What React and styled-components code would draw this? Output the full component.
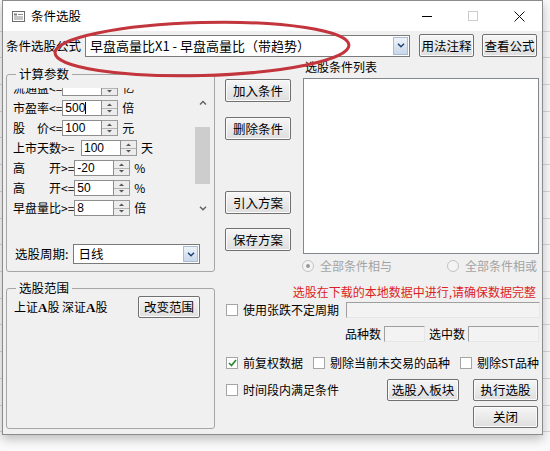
import React from "react";
import styled, { createGlobalStyle } from "styled-components";

const GlobalStyle = createGlobalStyle`
  html, body {
    margin: 0;
    padding: 0;
  }
  body {
    width: 550px;
    height: 451px;
    overflow: hidden;
    background-color: #fafafa;
    background-image: repeating-linear-gradient(
      to bottom,
      transparent 0,
      transparent 25.7px,
      #d6d6d6 25.7px,
      #d6d6d6 26.7px
    );
    background-position: 0 5px;
    font-family: "Noto Sans CJK SC", "Liberation Sans", sans-serif;
    font-size: 12px;
    line-height: 16px;
    color: #000;
  }
`;

const Dialog = styled.div`
  position: relative;
  margin-left: 2px;
  width: 541px;
  height: 435px;
  box-sizing: border-box;
  border: 1px solid #8c8c8c;
  background: #f0f0f0;
  display: flex;
  flex-direction: column;
  box-shadow: 0 4px 10px rgba(0, 0, 0, 0.25);
`;

const TitleBar = styled.div`
  height: 30px;
  background: #fff;
  display: flex;
  align-items: center;
  padding-left: 9px;
`;

const TitleText = styled.span`
  margin-left: 6px;
  font-size: 12.5px;
  flex: 1;
`;

const WinBtn = styled.div`
  width: 46px;
  height: 30px;
  display: flex;
  align-items: center;
  justify-content: center;
`;

const FormulaRow = styled.div`
  margin-top: 3px;
  height: 23px;
  padding: 0 3px;
  display: flex;
  align-items: center;
`;

const Label = styled.span`
  white-space: nowrap;
  margin-left: ${(p) => p.$ml || 0}px;
  font-size: ${(p) => p.$fs || 12}px;
`;

const Combo = styled.div`
  margin-left: ${(p) => p.$ml || 0}px;
  width: ${(p) => p.$w}px;
  height: ${(p) => p.$h}px;
  box-sizing: border-box;
  border: 1px solid #7a7a7a;
  background: #fff;
  display: flex;
  font-size: ${(p) => p.$fs || 12}px;
`;

const ComboText = styled.div`
  flex: 1;
  padding-left: 4px;
  display: flex;
  align-items: center;
  white-space: pre;
  overflow: hidden;
`;

const ComboArrow = styled.div`
  width: 15px;
  margin: 1px;
  box-sizing: border-box;
  border: 1px solid #a9bdd6;
  background: linear-gradient(#eef3f9, #c8d7ea);
  display: flex;
  align-items: center;
  justify-content: center;
`;

const Btn = styled.button`
  margin-top: ${(p) => p.$mt || 0}px;
  margin-left: ${(p) => p.$ml || 0}px;
  width: ${(p) => p.$w}px;
  height: ${(p) => p.$h || 22}px;
  padding: 0;
  font: inherit;
  font-size: 12.5px;
  color: #000;
  border: 1px solid #707070;
  border-radius: 2px;
  background: linear-gradient(#f6f6f6, #dedede);
  box-shadow: inset 0 0 0 1px #fbfbfb;
  flex-shrink: 0;
`;

const Main = styled.div`
  margin-top: 2px;
  flex: 1;
  display: flex;
  padding: 0 0 5px 3px;
`;

const LeftCol = styled.div`
  width: 210px;
  padding-top: 7px;
  display: flex;
  flex-direction: column;
  gap: 8px;
`;

const Group = styled.fieldset`
  margin: 0;
  min-width: 0;
  padding: ${(p) => p.$pad};
  border: 1px solid #a6a6a6;
  border-radius: 3px;
  flex: ${(p) => (p.$grow ? 1 : "none")};
  width: 209px;
  box-sizing: border-box;
`;

const Legend = styled.legend`
  margin-left: 6px;
  padding: 0 3px;
  line-height: 16px;
  font-size: 12.5px;
`;

const ScrollArea = styled.div`
  height: 134px;
  display: flex;
`;

const Viewport = styled.div`
  flex: 1;
  overflow: hidden;
  padding-left: 3px;
`;

const RowList = styled.div`
  margin-top: -10px;
`;

const ParamRow = styled.div`
  height: 20px;
  display: flex;
  align-items: center;
`;

const ParamLabel = styled.span`
  min-width: ${(p) => p.$w}px;
  flex-shrink: 0;
  white-space: nowrap;
  font-size: 12px;
`;

const NumInput = styled.div`
  width: 40px;
  height: 16px;
  box-sizing: border-box;
  border: 1px solid #8e8e8e;
  background: #fff;
  padding-left: 2px;
  display: flex;
  align-items: center;
  font-family: "Liberation Sans", sans-serif;
  font-size: 12px;
`;

const Caret = styled.span`
  display: inline-block;
  width: 1px;
  height: 12px;
  background: #000;
`;

const Spin = styled.div`
  width: 16px;
  height: 16px;
  box-sizing: border-box;
  border: 1px solid #9a9a9a;
  border-left: none;
  background: #ececec;
  display: flex;
  flex-direction: column;
`;

const SpinHalf = styled.div`
  flex: 1;
  display: flex;
  align-items: center;
  justify-content: center;
  border-bottom: ${(p) => (p.$top ? "1px solid #b4b4b4" : "none")};
`;

const Unit = styled.span`
  margin-left: 4px;
  font-size: 12px;
`;

const ScrollBar = styled.div`
  width: 17px;
  margin: 4px 0;
  display: flex;
  flex-direction: column;
`;

const ScrollArrow = styled.div`
  height: 20px;
  display: flex;
  align-items: center;
  justify-content: center;
`;

const ScrollTrack = styled.div`
  flex: 1;
  padding-top: 15px;
`;

const ScrollThumb = styled.div`
  height: 57px;
  margin: 0 1px;
  background: #cdcdcd;
`;

const PeriodRow = styled.div`
  margin-top: 22px;
  height: 20px;
  padding-left: 5px;
  display: flex;
  align-items: center;
`;

const RangeRow = styled.div`
  height: 22px;
  padding: 0 11px 0 4px;
  display: flex;
  align-items: center;
  justify-content: space-between;
`;

const SerifA = styled.b`
  font-family: "Liberation Serif", serif;
  font-size: 13px;
`;

const RightCol = styled.div`
  margin-left: 9px;
  width: 315px;
  display: flex;
  flex-direction: column;
`;

const TopArea = styled.div`
  display: flex;
`;

const BtnCol = styled.div`
  width: 66px;
  display: flex;
  flex-direction: column;
`;

const ListCol = styled.div`
  margin-left: 12px;
  width: 236px;
`;

const ListLabel = styled.div`
  height: 19px;
  padding-left: 2px;
`;

const ListBox = styled.div`
  height: 176px;
  box-sizing: border-box;
  border: 1px solid #828790;
  background: #fff;
`;

const RadioRow = styled.div`
  margin: 1px 0 0 77px;
  width: 235px;
  height: 21px;
  display: flex;
  align-items: center;
  justify-content: space-between;
`;

const RadioItem = styled.div`
  display: flex;
  align-items: center;
  gap: 6px;
  color: #a3a3a3;
`;

const Radio = styled.span`
  width: 12px;
  height: 12px;
  box-sizing: border-box;
  border-radius: 50%;
  border: 1px solid #c3c3c3;
  background: #f4f4f4;
  display: flex;
  align-items: center;
  justify-content: center;
  &::after {
    content: "";
    width: 4px;
    height: 4px;
    border-radius: 50%;
    background: ${(p) => (p.$on ? "#9a9a9a" : "transparent")};
  }
`;

const Notice = styled.div`
  margin-top: 6px;
  height: 20px;
  padding-right: 4px;
  display: flex;
  align-items: center;
  justify-content: flex-end;
  color: #dc1f24;
  white-space: nowrap;
`;

const LineRow = styled.div`
  margin-top: ${(p) => p.$mt || 0}px;
  height: 16px;
  display: flex;
  align-items: center;
  justify-content: ${(p) => (p.$end ? "flex-end" : "flex-start")};
  padding-right: ${(p) => (p.$end ? 1 : 0)}px;
`;

const Check = styled.label`
  display: flex;
  align-items: center;
  gap: 5px;
  margin-left: ${(p) => p.$ml || 0}px;
  white-space: nowrap;
`;

const Box = styled.span`
  width: 12px;
  height: 12px;
  box-sizing: border-box;
  border: 1px solid #a5a5a5;
  background: #fff;
  display: flex;
  align-items: center;
  justify-content: center;
`;

const Field = styled.div`
  margin-left: ${(p) => p.$ml || 0}px;
  width: ${(p) => (p.$w ? p.$w + "px" : "auto")};
  flex: ${(p) => (p.$w ? "none" : 1)};
  height: 16px;
  box-sizing: border-box;
  border-top: 1px solid #9f9f9f;
  border-left: 1px solid #9f9f9f;
  border-right: 1px solid #e6e6e6;
  border-bottom: 1px solid #e6e6e6;
  background: #f3f3f3;
`;

const BottomArea = styled.div`
  margin-top: 8px;
  padding-right: 2px;
  display: flex;
  align-items: flex-start;
`;

const BottomCheck = styled.div`
  flex: 1;
  height: 22px;
  display: flex;
  align-items: center;
  padding-left: 1px;
`;

const StackCol = styled.div`
  margin-left: 14px;
  display: flex;
  flex-direction: column;
  gap: 5px;
`;

const Annotation = styled.svg`
  position: absolute;
  left: 0;
  top: 0;
  pointer-events: none;
`;

const Chevron = ({ up, color = "#555", w = 8 }) => (
  <svg width={w} height="5" viewBox="0 0 8 5">
    <path
      d={up ? "M1 4.5 L4 1.5 L7 4.5" : "M1 0.8 L4 3.8 L7 0.8"}
      fill="none"
      stroke={color}
      strokeWidth="1.4"
    />
  </svg>
);

const Tri = ({ up }) => (
  <svg width="5" height="3" viewBox="0 0 5 3">
    <path d={up ? "M0 3 L2.5 0.5 L5 3 Z" : "M0 0 L2.5 2.5 L5 0 Z"} fill="#555" />
  </svg>
);

const Tick = () => (
  <svg width="9" height="8" viewBox="0 0 9 8">
    <path d="M1 4 L3.5 6.5 L8 1" fill="none" stroke="#2b8a2b" strokeWidth="1.7" />
  </svg>
);

const ComboBox = ({ w, h, ml, fs, children }) => (
  <Combo $w={w} $h={h} $ml={ml} $fs={fs}>
    <ComboText>{children}</ComboText>
    <ComboArrow>
      <Chevron color="#1e3f73" />
    </ComboArrow>
  </Combo>
);

const params = [
  { label: "流通盘<=", w: 49, value: "", unit: "亿" },
  { label: "市盈率<=", w: 49, value: "500", unit: "倍", caret: true },
  { label: "股\u3000价<=", w: 49, value: "100", unit: "元" },
  { label: "上市天数>= ", w: 68, value: "100", unit: "天" },
  { label: "高\u3000\u3000开>=", w: 61, value: "-20", unit: "%" },
  { label: "高\u3000\u3000开<=", w: 61, value: "50", unit: "%" },
  { label: "早盘量比>=", w: 61, value: "8", unit: "倍" },
];

const App = () => {
  return (
    <>
      <GlobalStyle />
      <Dialog>
        <TitleBar>
          <svg width="13" height="11" viewBox="0 0 13 11">
            <rect x="0.5" y="0.5" width="12" height="10" fill="#fff" stroke="#6b6b6b" />
            <rect x="2" y="2.5" width="3" height="2" fill="#7a7a7a" />
            <path d="M6 3.5 H11 M2 6 H11 M2 8 H11" stroke="#8a8a8a" strokeWidth="1" />
          </svg>
          <TitleText>条件选股</TitleText>
          <WinBtn>
            <svg width="10" height="10" viewBox="0 0 10 10">
              <path d="M0 5.5 H10" stroke="#000" strokeWidth="1" />
            </svg>
          </WinBtn>
          <WinBtn>
            <svg width="10" height="10" viewBox="0 0 10 10">
              <rect x="0.5" y="0.5" width="9" height="9" fill="none" stroke="#cccccc" />
            </svg>
          </WinBtn>
          <WinBtn>
            <svg width="11" height="11" viewBox="0 0 11 11">
              <path d="M0.5 0.5 L10.5 10.5 M10.5 0.5 L0.5 10.5" stroke="#111" strokeWidth="1" />
            </svg>
          </WinBtn>
        </TitleBar>

        <FormulaRow>
          <Label $fs={12.5}>条件选股公式</Label>
          <ComboBox w={325} h={22} ml={4} fs={13}>
            早盘高量比X1 - 早盘高量比（带趋势）
          </ComboBox>
          <Btn $w={55} $h={23} $ml={9}>用法注释</Btn>
          <Btn $w={55} $h={23} $ml={8}>查看公式</Btn>
        </FormulaRow>

        <Main>
          <LeftCol>
            <Group $pad="6px 3px 7px 3px">
              <Legend>计算参数</Legend>
              <ScrollArea>
                <Viewport>
                  <RowList>
                    {params.map((p, i) => (
                      <ParamRow key={i}>
                        <ParamLabel $w={p.w}>{p.label}</ParamLabel>
                        <NumInput>
                          {p.value}
                          {p.caret && <Caret />}
                        </NumInput>
                        <Spin>
                          <SpinHalf $top>
                            <Tri up />
                          </SpinHalf>
                          <SpinHalf>
                            <Tri />
                          </SpinHalf>
                        </Spin>
                        <Unit>{p.unit}</Unit>
                      </ParamRow>
                    ))}
                  </RowList>
                </Viewport>
                <ScrollBar>
                  <ScrollArrow>
                    <Chevron up color="#606060" />
                  </ScrollArrow>
                  <ScrollTrack>
                    <ScrollThumb />
                  </ScrollTrack>
                  <ScrollArrow>
                    <Chevron color="#606060" />
                  </ScrollArrow>
                </ScrollBar>
              </ScrollArea>
              <PeriodRow>
                <Label $fs={12.5}>选股周期:</Label>
                <ComboBox w={127} h={20} ml={5} fs={12.5}>
                  日线
                </ComboBox>
              </PeriodRow>
            </Group>

            <Group $pad="0 3px 0 3px" $grow>
              <Legend>选股范围</Legend>
              <RangeRow>
                <Label>
                  上证<SerifA>A</SerifA>股 深证<SerifA>A</SerifA>股
                </Label>
                <Btn $w={62} $h={22}>改变范围</Btn>
              </RangeRow>
            </Group>
          </LeftCol>

          <RightCol>
            <TopArea>
              <BtnCol>
                <Btn $w={66} $h={23} $mt={20}>加入条件</Btn>
                <Btn $w={66} $h={23} $mt={15}>删除条件</Btn>
                <Btn $w={66} $h={23} $mt={51}>引入方案</Btn>
                <Btn $w={66} $h={23} $mt={14}>保存方案</Btn>
              </BtnCol>
              <ListCol>
                <ListLabel>选股条件列表</ListLabel>
                <ListBox />
              </ListCol>
            </TopArea>

            <RadioRow>
              <RadioItem>
                <Radio $on />
                全部条件相与
              </RadioItem>
              <RadioItem>
                <Radio />
                全部条件相或
              </RadioItem>
            </RadioRow>

            <Notice>选股在下载的本地数据中进行,请确保数据完整</Notice>

            <LineRow>
              <Check $ml={1}>
                <Box />
                使用张跌不定周期
              </Check>
              <Field $ml={7} />
            </LineRow>

            <LineRow $mt={8} $end>
              <Label>品种数</Label>
              <Field $w={41} $ml={3} />
              <Label $ml={4}>选中数</Label>
              <Field $w={71} $ml={3} />
            </LineRow>

            <LineRow $mt={13}>
              <Check $ml={1}>
                <Box>
                  <Tick />
                </Box>
                前复权数据
              </Check>
              <Check $ml={10}>
                <Box />
                剔除当前未交易的品种
              </Check>
              <Check $ml={10}>
                <Box />
                剔除ST品种
              </Check>
            </LineRow>

            <BottomArea>
              <BottomCheck>
                <Check>
                  <Box />
                  时间段内满足条件
                </Check>
              </BottomCheck>
              <Btn $w={72} $h={22}>选股入板块</Btn>
              <StackCol>
                <Btn $w={65} $h={22}>执行选股</Btn>
                <Btn $w={65} $h={22}>关闭</Btn>
              </StackCol>
            </BottomArea>
          </RightCol>
        </Main>

        <Annotation width="550" height="110" viewBox="0 0 550 110">
          <ellipse
            cx="199"
            cy="48"
            rx="147"
            ry="26.5"
            fill="none"
            stroke="#c3353d"
            strokeWidth="3"
            transform="rotate(-1.5 199 48)"
          />
        </Annotation>
      </Dialog>
    </>
  );
};

export default App;
